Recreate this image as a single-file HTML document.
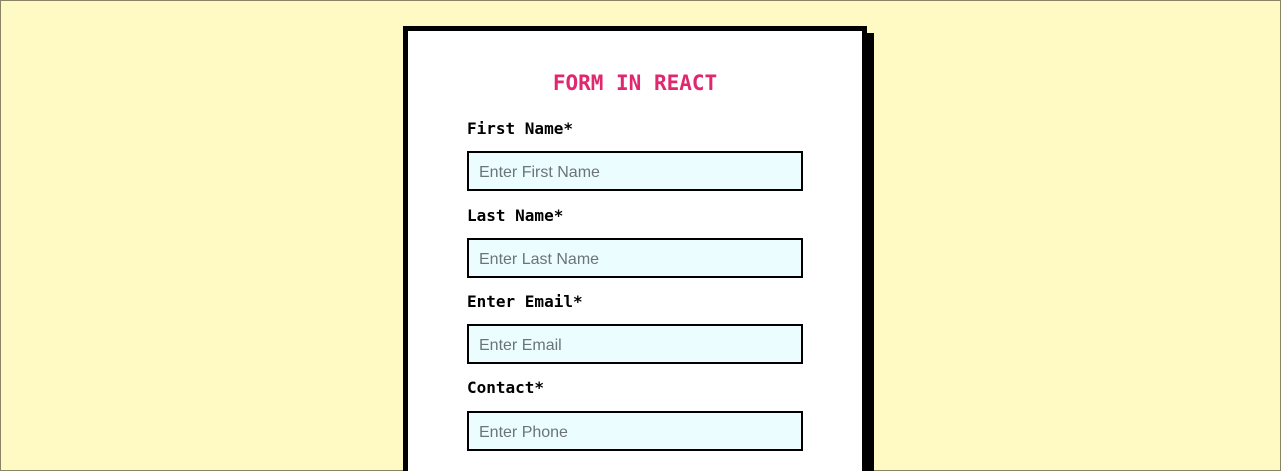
<!DOCTYPE html>
<html><head><style>
html,body{margin:0;padding:0;overflow:hidden;height:471px}
body{width:1281px;height:471px;background:#fff9c4;box-sizing:border-box;border:1px solid #8a8466;position:relative;overflow:hidden}
.shadow{position:absolute;left:409px;top:32px;width:464px;height:438px;background:#000}
.card{position:absolute;left:402px;top:25px;width:454px;height:440px;background:#fff;border:5px solid #000;border-bottom:0}
h1{position:absolute;left:0;right:0;top:41px;margin:0;text-align:center;font:bold 21px "DejaVu Sans Mono",monospace;color:#e0286f;line-height:22px}
label{position:absolute;left:59px;font:bold 16px "DejaVu Sans Mono",monospace;color:#000;line-height:20px}
.in{position:absolute;left:59px;height:34px;border:2px solid #000;background:#ebfdff;font:16px "Liberation Sans",sans-serif;color:#6b7478;line-height:36px;padding:2px 0 0 10px;width:322px}
</style></head><body>
<div class="shadow"></div>
<div class="card">
<h1>FORM IN REACT</h1>
<label style="top:88px">First Name*</label><div class="in" style="top:120px">Enter First Name</div>
<label style="top:175px">Last Name*</label><div class="in" style="top:207px">Enter Last Name</div>
<label style="top:261px">Enter Email*</label><div class="in" style="top:293px">Enter Email</div>
<label style="top:347px">Contact*</label><div class="in" style="top:380px">Enter Phone</div>
</div>
</body></html>
